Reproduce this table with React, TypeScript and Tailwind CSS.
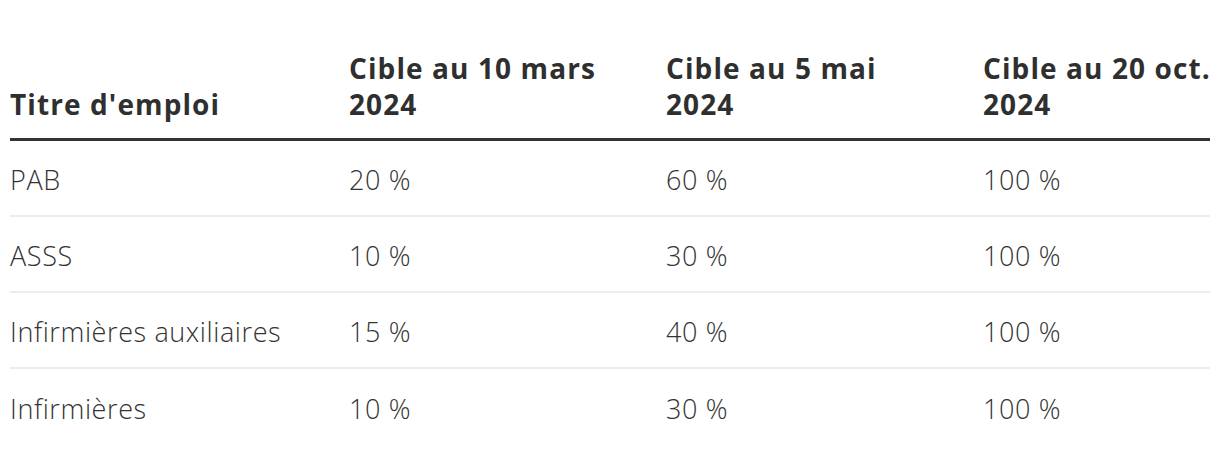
import React from "react";

const rows = [
  { title: "PAB", mars: "20 %", mai: "60 %", oct: "100 %" },
  { title: "ASSS", mars: "10 %", mai: "30 %", oct: "100 %" },
  { title: "Infirmières auxiliaires", mars: "15 %", mai: "40 %", oct: "100 %" },
  { title: "Infirmières", mars: "10 %", mai: "30 %", oct: "100 %" },
];

const cols = "grid grid-cols-[339px_317px_317px_1fr]";

const App = () => {
  return (
    <div className="w-full bg-white px-[10px] pt-[50px]" style={{ fontFamily: "'Open Sans', Lato, sans-serif" }}>
      {/* Header */}
      <div className={`${cols} items-end whitespace-nowrap border-b-[3px] border-[#333333] pb-[16px] text-[28px] font-bold leading-[36px] tracking-[1.1px] text-[#2f2f2f]`}>
        <div>Titre d'emploi</div>
        <div>Cible au 10 mars<br />2024</div>
        <div>Cible au 5 mai<br />2024</div>
        <div>Cible au 20 oct.<br />2024</div>
      </div>

      {/* Rows */}
      {rows.map((row, index) => (
        <div
          key={index}
          className={`${cols} h-[76px] items-center whitespace-nowrap pt-[4px] text-[27px] font-light tracking-[0.6px] text-[#333333] ${index < rows.length - 1 ? "border-b-2 border-[#ececec]" : ""}`}
        >
          <div>{row.title}</div>
          <div>{row.mars}</div>
          <div>{row.mai}</div>
          <div>{row.oct}</div>
        </div>
      ))}
    </div>
  );
};

export default App;
